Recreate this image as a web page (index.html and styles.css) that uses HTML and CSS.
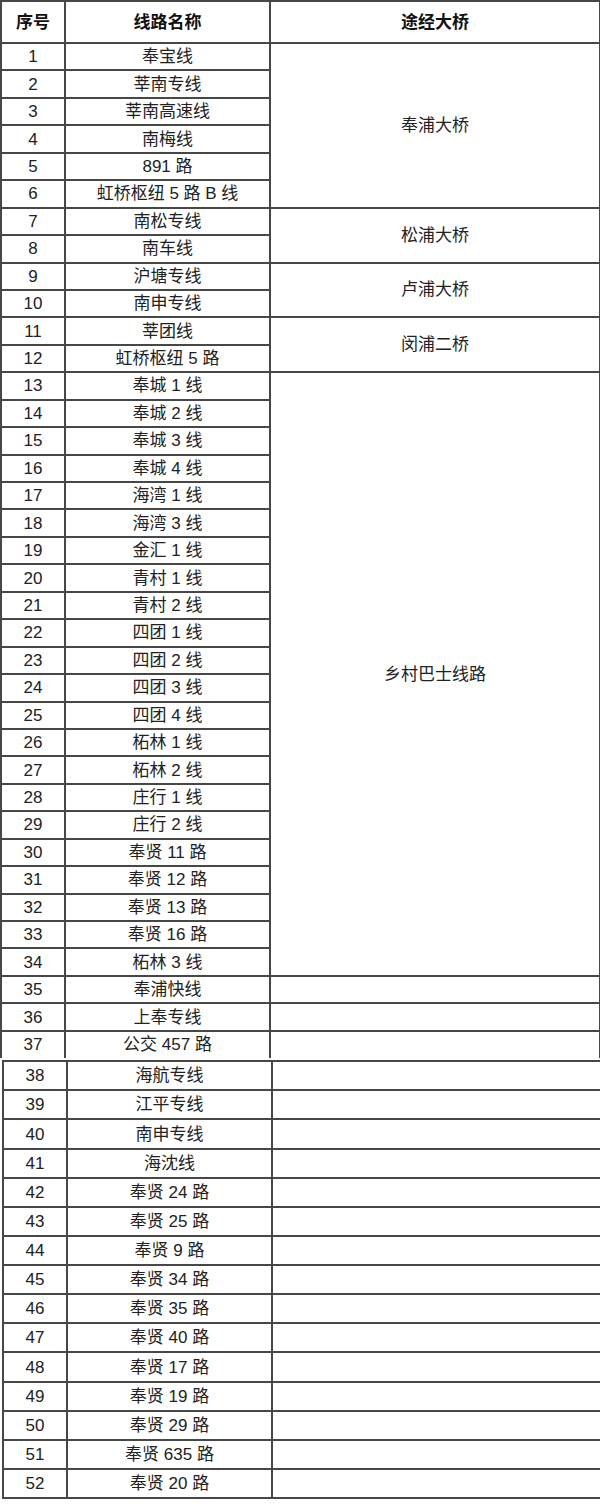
FILE: index.html
```html
<!DOCTYPE html>
<html lang="zh-CN">
<head>
<meta charset="utf-8">
<title>线路表</title>
<link rel="stylesheet" href="styles.css">
</head>
<body>
<div class="page">
<table class="tbl tbl-top">
<colgroup><col class="c1"><col class="c2"><col class="c3"></colgroup>
<thead>
<tr class="head"><th>序号</th><th>线路名称</th><th>途经大桥</th></tr>
</thead>
<tbody>
<tr><td>1</td><td>奉宝线</td><td rowspan="6">奉浦大桥</td></tr>
<tr><td>2</td><td>莘南专线</td></tr>
<tr><td>3</td><td>莘南高速线</td></tr>
<tr><td>4</td><td>南梅线</td></tr>
<tr><td>5</td><td>891 路</td></tr>
<tr><td>6</td><td>虹桥枢纽 5 路 B 线</td></tr>
<tr><td>7</td><td>南松专线</td><td rowspan="2">松浦大桥</td></tr>
<tr><td>8</td><td>南车线</td></tr>
<tr><td>9</td><td>沪塘专线</td><td rowspan="2">卢浦大桥</td></tr>
<tr><td>10</td><td>南申专线</td></tr>
<tr><td>11</td><td>莘团线</td><td rowspan="2">闵浦二桥</td></tr>
<tr><td>12</td><td>虹桥枢纽 5 路</td></tr>
<tr><td>13</td><td>奉城 1 线</td><td rowspan="22">乡村巴士线路</td></tr>
<tr><td>14</td><td>奉城 2 线</td></tr>
<tr><td>15</td><td>奉城 3 线</td></tr>
<tr><td>16</td><td>奉城 4 线</td></tr>
<tr><td>17</td><td>海湾 1 线</td></tr>
<tr><td>18</td><td>海湾 3 线</td></tr>
<tr><td>19</td><td>金汇 1 线</td></tr>
<tr><td>20</td><td>青村 1 线</td></tr>
<tr><td>21</td><td>青村 2 线</td></tr>
<tr><td>22</td><td>四团 1 线</td></tr>
<tr><td>23</td><td>四团 2 线</td></tr>
<tr><td>24</td><td>四团 3 线</td></tr>
<tr><td>25</td><td>四团 4 线</td></tr>
<tr><td>26</td><td>柘林 1 线</td></tr>
<tr><td>27</td><td>柘林 2 线</td></tr>
<tr><td>28</td><td>庄行 1 线</td></tr>
<tr><td>29</td><td>庄行 2 线</td></tr>
<tr><td>30</td><td>奉贤 11 路</td></tr>
<tr><td>31</td><td>奉贤 12 路</td></tr>
<tr><td>32</td><td>奉贤 13 路</td></tr>
<tr><td>33</td><td>奉贤 16 路</td></tr>
<tr><td>34</td><td>柘林 3 线</td></tr>
<tr><td>35</td><td>奉浦快线</td><td></td></tr>
<tr><td>36</td><td>上奉专线</td><td></td></tr>
<tr class="last"><td>37</td><td>公交 457 路</td><td></td></tr>
</tbody>
</table>
<table class="tbl tbl-bottom">
<colgroup><col class="d1"><col class="d2"><col class="d3"></colgroup>
<tbody>
<tr><td>38</td><td>海航专线</td><td></td></tr>
<tr><td>39</td><td>江平专线</td><td></td></tr>
<tr><td>40</td><td>南申专线</td><td></td></tr>
<tr><td>41</td><td>海沈线</td><td></td></tr>
<tr><td>42</td><td>奉贤 24 路</td><td></td></tr>
<tr><td>43</td><td>奉贤 25 路</td><td></td></tr>
<tr><td>44</td><td>奉贤 9 路</td><td></td></tr>
<tr><td>45</td><td>奉贤 34 路</td><td></td></tr>
<tr><td>46</td><td>奉贤 35 路</td><td></td></tr>
<tr><td>47</td><td>奉贤 40 路</td><td></td></tr>
<tr><td>48</td><td>奉贤 17 路</td><td></td></tr>
<tr><td>49</td><td>奉贤 19 路</td><td></td></tr>
<tr><td>50</td><td>奉贤 29 路</td><td></td></tr>
<tr><td>51</td><td>奉贤 635 路</td><td></td></tr>
<tr><td>52</td><td>奉贤 20 路</td><td></td></tr>
</tbody>
</table>
</div>
</body>
</html>
```
FILE: styles.css
```css
html, body {
  margin: 0;
  padding: 0;
  background: #ffffff;
}
body {
  width: 600px;
  overflow: hidden;
  font-family: "Liberation Sans", "Noto Sans CJK SC", sans-serif;
  color: #222222;
}
.page {
  width: 600px;
  height: 1512px;
  overflow: hidden;
}
.tbl {
  border-collapse: collapse;
  table-layout: fixed;
}
.tbl td, .tbl th {
  border: 2px solid #474747;
  padding: 0;
  text-align: center;
  vertical-align: middle;
  font-size: 17px;
  font-weight: normal;
  white-space: nowrap;
  line-height: 1;
}
.tbl-top {
  width: 599px;
}
.c1 { width: 64px; }
.c2 { width: 205px; }
.c3 { width: 330px; }
.tbl-top .head th {
  height: 40px;
  font-weight: bold;
  font-size: 17px;
  color: #111111;
}
.tbl-top tbody tr {
  height: 27.44px;
}
.tbl-top tr.last td {
  border-bottom: none;
}
.tbl-bottom {
  margin-top: 2px;
  margin-left: 2px;
  width: 660px;
}
.d1 { width: 64px; }
.d2 { width: 205px; }
.d3 { width: 391px; }
.tbl-bottom tr {
  height: 29.13px;
}
```
